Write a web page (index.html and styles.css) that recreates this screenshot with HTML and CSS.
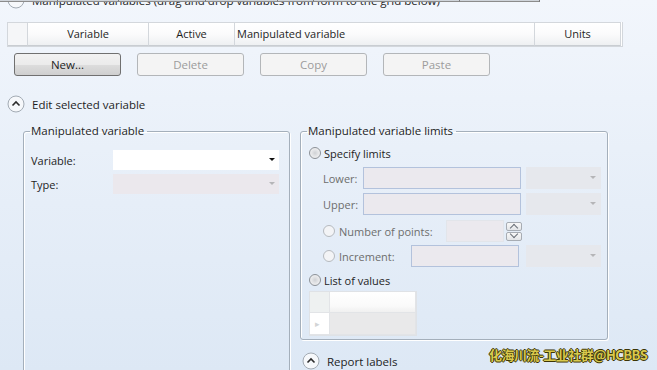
FILE: index.html
```html
<!DOCTYPE html>
<html lang="en">
<head>
    <meta charset="UTF-8">
    <meta name="viewport" content="width=device-width, initial-scale=1.0">
    <title>Manipulated variables</title>
    <link rel="stylesheet" href="styles.css">
</head>
<body>
    <div class="tabstrip">
        <span></span><span></span><span></span><span></span><span></span><span></span><span></span><span class="empty"></span>
    </div>

    <div class="section top-section">
        <span class="toggle">
            <svg width="18" height="18" viewBox="0 0 18 18"><circle cx="9" cy="9" r="8" class="ring"/><path d="M5.5 10.5 L9 7 L12.5 10.5" class="chev"/></svg>
        </span>
        <span>Manipulated variables (drag and drop variables from form to the grid below)</span>
    </div>

    <div class="grid">
        <div class="cell corner"></div>
        <div class="cell">Variable</div>
        <div class="cell">Active</div>
        <div class="cell left">Manipulated variable</div>
        <div class="cell">Units</div>
    </div>

    <div class="buttons">
        <button class="btn">New...</button>
        <button class="btn" disabled>Delete</button>
        <button class="btn" disabled>Copy</button>
        <button class="btn" disabled>Paste</button>
    </div>

    <div class="section edit-section">
        <span class="toggle">
            <svg width="18" height="18" viewBox="0 0 18 18"><circle cx="9" cy="9" r="8" class="ring"/><path d="M5.5 10.5 L9 7 L12.5 10.5" class="chev"/></svg>
        </span>
        <span>Edit selected variable</span>
    </div>

    <div class="groups">
        <fieldset class="group var-group">
            <legend>Manipulated variable</legend>
            <div class="form-row">
                <label>Variable:</label>
                <div class="combo white"><span class="arrow"></span></div>
            </div>
            <div class="form-row">
                <label>Type:</label>
                <div class="combo off"><span class="arrow"></span></div>
            </div>
        </fieldset>

        <div class="right-col">
            <fieldset class="group limits-group">
                <legend>Manipulated variable limits</legend>

                <div class="radio-row">
                    <span class="radio"></span>
                    <span>Specify limits</span>
                </div>

                <div class="limit-row row-lower">
                    <span class="dim label-w">Lower:</span>
                    <div class="textbox wide"></div>
                    <div class="combo side off"><span class="arrow"></span></div>
                </div>

                <div class="limit-row row-upper">
                    <span class="dim label-w">Upper:</span>
                    <div class="textbox wide"></div>
                    <div class="combo side off"><span class="arrow"></span></div>
                </div>

                <div class="limit-row row-points">
                    <span class="radio light"></span>
                    <span class="dim points-label">Number of points:</span>
                    <div class="textbox spin-box"></div>
                    <div class="spinner">
                        <span class="spin up"></span>
                        <span class="spin down"></span>
                    </div>
                </div>

                <div class="limit-row row-increment">
                    <span class="radio light"></span>
                    <span class="dim inc-label">Increment:</span>
                    <div class="textbox inc-box"></div>
                    <div class="combo side off"><span class="arrow"></span></div>
                </div>

                <div class="radio-row row-list">
                    <span class="radio"></span>
                    <span>List of values</span>
                </div>

                <div class="values">
                    <div class="vcell vcorner"></div>
                    <div class="vcell vhead"></div>
                    <div class="vcell vrowhead">&#9656;</div>
                    <div class="vcell vdata"></div>
                </div>
            </fieldset>

            <div class="section report-section">
                <span class="toggle">
                    <svg width="18" height="18" viewBox="0 0 18 18"><circle cx="9" cy="9" r="8" class="ring"/><path d="M5.5 10.5 L9 7 L12.5 10.5" class="chev"/></svg>
                </span>
                <span>Report labels</span>
            </div>
        </div>
    </div>

    <div class="watermark">化海川流-工业社群@HCBBS</div>
</body>
</html>
```

FILE: styles.css
```css
html, body {
    margin: 0;
    width: 657px;
    height: 370px;
    overflow: hidden;
}

body {
    position: relative;
    font-family: "Open Sans", "Noto Sans", sans-serif;
    font-size: 11px;
    color: #1e1e1e;
    background: linear-gradient(180deg, #f2f6fc 0%, #e9f0f9 40%, #dde8f5 100%);
}

/* bottom edge of the tab row above */
.tabstrip {
    position: relative;
    z-index: 1;
    display: grid;
    grid-template-columns: 57px 61px 87px 72px 36px 146px 80px 1fr;
    height: 2px;
}

.tabstrip span {
    background: #cfd4da;
    border-left: 1px solid #7b7b7b;
    border-bottom: 1px solid #8c8c8c;
}

.tabstrip span:first-child {
    border-left: none;
}

.tabstrip span.empty {
    background: transparent;
    border-bottom: none;
}

/* collapsible section headers */
.section {
    display: flex;
    align-items: center;
    gap: 7px;
    height: 18px;
    font-size: 11.5px;
}

.toggle {
    display: flex;
    width: 18px;
    height: 18px;
}

.ring {
    fill: #f6f8fb;
    stroke: #a3abb4;
    stroke-width: 1;
}

.chev {
    fill: none;
    stroke: #2b2b2b;
    stroke-width: 1.6;
}

.top-section {
    margin: -11px 0 0 7px;
}

.edit-section {
    margin: 19px 0 0 7px;
}

.report-section {
    margin: 12px 0 0 2px;
}

/* variables grid header */
.grid {
    display: grid;
    grid-template-columns: 20px 121px 86px 300px 86px;
    width: 614px;
    margin: 13px 0 0 7px;
    border: 1px solid #d3d7dc;
    border-top: none;
    background: #fff;
}

.grid .cell {
    height: 22px;
    line-height: 22px;
    text-align: center;
    background: linear-gradient(180deg, #ffffff 0%, #fbfbfc 50%, #eef0f2 100%);
    border-top: 1px solid #d3d7dc;
    border-right: 1px solid #d3d7dc;
    border-bottom: 1px solid #c9cdd2;
}

.grid .cell.left {
    text-align: left;
    padding-left: 2px;
}

.grid .corner {
    background: #f5f6f8;
}

/* buttons */
.buttons {
    display: flex;
    gap: 16px;
    margin: 6px 0 0 14px;
}

.btn {
    width: 107px;
    height: 23px;
    padding: 0;
    font-family: inherit;
    font-size: 11.5px;
    color: #1e1e1e;
    border: 1px solid #707070;
    border-radius: 3px;
    background: linear-gradient(180deg, #f2f2f2 0%, #ebebeb 50%, #dddddd 51%, #cfcfcf 100%);
}

.btn:disabled {
    color: #9c9c9c;
    border-color: #b3b6b9;
    background: #f4f4f4;
}

/* group boxes */
.groups {
    display: flex;
    align-items: flex-start;
    gap: 10px;
    margin: 11px 0 0 23px;
}

.group {
    margin: 0;
    min-width: 0;
    border: 1px solid #a4afbb;
    border-radius: 3px;
    box-shadow: inset 1px 1px 0 #fff, 1px 1px 0 #fff;
}

.group legend {
    padding: 0 3px 0 1px;
    margin-left: -1px;
    font-size: 11.5px;
    line-height: 14px;
}

.var-group {
    width: 267px;
    height: 260px;
    box-sizing: border-box;
    padding: 12px 10px 0 7px;
}

.form-row {
    display: flex;
    align-items: center;
    height: 20px;
    margin-bottom: 4px;
}

.form-row label {
    width: 82px;
}

.combo {
    position: relative;
    height: 20px;
    box-sizing: border-box;
}

.form-row .combo {
    width: 166px;
}

.combo.white {
    background: #fff;
}

.combo.off {
    background: #ebe8ed;
}

.combo .arrow {
    position: absolute;
    right: 4px;
    top: 8px;
    border-left: 3px solid transparent;
    border-right: 3px solid transparent;
    border-top: 3px solid #111;
}

.combo.off .arrow {
    border-top-color: #b5b5b8;
}

.right-col {
    width: 308px;
}

.limits-group {
    width: 308px;
    box-sizing: border-box;
    padding: 7px 6px 3px 8px;
}

.limits-group legend {
    margin-left: -2px;
}

.radio-row {
    display: flex;
    align-items: center;
    gap: 3px;
    height: 16px;
}

.radio {
    width: 12px;
    height: 12px;
    box-sizing: border-box;
    border-radius: 50%;
    border: 1px solid #8c9197;
    background: radial-gradient(circle at 50% 50%, #cfd1d4 0%, #e4e5e7 45%, #f7f7f7 100%);
    flex: none;
}

.radio.light {
    border-color: #b6babf;
    background: #f3f4f6;
}

.limit-row {
    display: flex;
    align-items: center;
    height: 22px;
    margin-left: 14px;
}

.row-lower { margin-top: 6px; }
.row-upper { margin-top: 4px; }
.row-points { margin-top: 5px; }
.row-increment { margin-top: 3px; }
.row-list { margin-top: 5px; }

.dim {
    color: #6d6d6d;
}

.label-w {
    width: 40px;
}

.textbox {
    height: 22px;
    box-sizing: border-box;
    background: #ebe9ee;
    border: 1px solid #b3c2dc;
}

.textbox.wide {
    width: 159px;
}

.combo.side {
    width: 75px;
    height: 22px;
    margin-left: 5px;
    background: #e6e8ed;
}

.combo.side .arrow {
    top: 9px;
    right: 5px;
}

.points-label {
    margin-left: 4px;
    width: 107px;
}

.spin-box {
    width: 58px;
    border-color: #e2e5ea;
}

.spinner {
    display: flex;
    flex-direction: column;
    gap: 1px;
    margin-left: 2px;
}

.spin {
    position: relative;
    width: 16px;
    height: 9px;
    box-sizing: border-box;
    border: 1px solid #a7acb3;
    border-radius: 2px;
    background: linear-gradient(180deg, #f8f8f8, #e3e5e8);
}

.spin::after {
    content: "";
    position: absolute;
    left: 4px;
    width: 5px;
    height: 5px;
    border-left: 1.5px solid #6a7078;
    border-top: 1.5px solid #6a7078;
}

.spin.up::after {
    top: 2px;
    transform: rotate(45deg);
}

.spin.down::after {
    top: -2px;
    transform: rotate(225deg);
}

.inc-label {
    margin-left: 4px;
    width: 72px;
}

.inc-box {
    width: 109px;
}

.row-increment .combo.side {
    margin-left: 7px;
}

.values {
    display: grid;
    grid-template-columns: 20px 86px;
    grid-template-rows: 21px 22px;
    width: 106px;
    margin-top: 3px;
    border: 1px solid #dfe2e6;
    background: #fff;
}

.vcell {
    box-sizing: border-box;
    border-right: 1px solid #e2e4e7;
    border-bottom: 1px solid #e2e4e7;
}

.vcorner {
    background: #eef1f1;
}

.vhead {
    background: linear-gradient(180deg, #ffffff 0%, #fafafa 70%, #f0f0f0 100%);
}

.vrowhead {
    background: #fff;
    color: #d2d4d6;
    font-size: 9px;
    line-height: 21px;
    padding-left: 5px;
}

.vdata {
    background: #e9e9ea;
}

/* watermark over the screen */
.watermark {
    position: absolute;
    left: 489px;
    top: 345px;
    font-family: "Noto Sans CJK SC", sans-serif;
    font-size: 13px;
    font-weight: bold;
    letter-spacing: -0.5px;
    color: #d9c94e;
    text-shadow: 1px 0 0 #3b3405, -1px 0 0 #3b3405, 0 1px 0 #3b3405, 0 -1px 0 #3b3405;
}
```
